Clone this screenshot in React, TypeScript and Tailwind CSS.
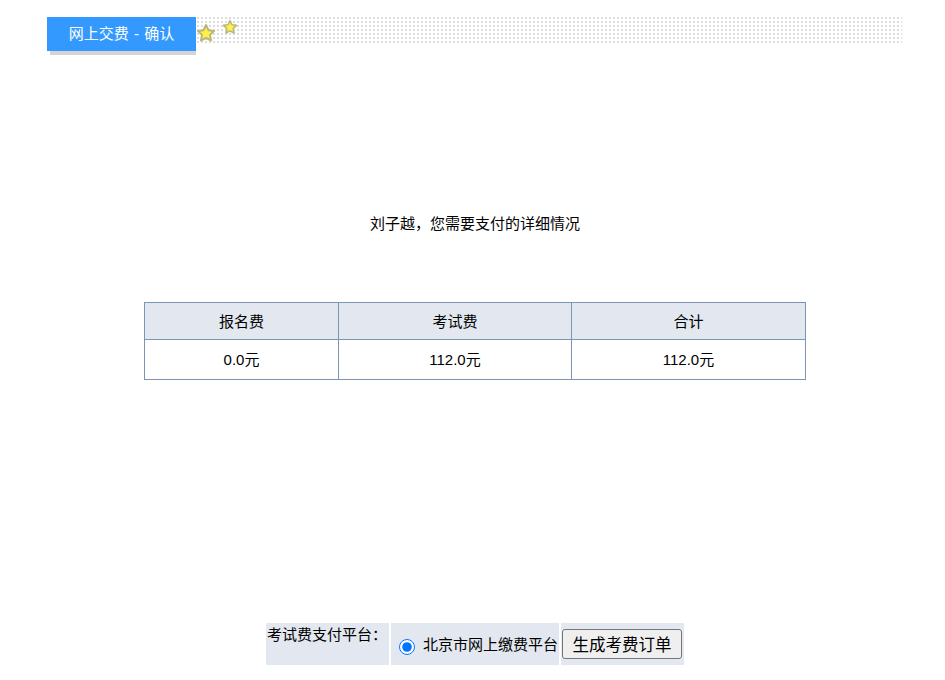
const font = "font-['Liberation_Sans','Noto_Sans_CJK_SC',sans-serif]";

const Star = ({ className }: { className: string }) => (
  <svg viewBox="0 0 20 20" className={className}>
    <path
      d="M10 2l2.5 5.2 5.6.8-4.1 3.9 1 5.6-5-2.7-5 2.7 1-5.6-4.1-3.9 5.6-.8z"
      fill="#fff04f"
      stroke="#b9b878"
      strokeWidth="2"
      strokeLinejoin="round"
    />
  </svg>
);

const cols = [
  { name: "报名费", fee: "0.0元", width: "w-[194px]" },
  { name: "考试费", fee: "112.0元", width: "w-[233px]" },
  { name: "合计", fee: "112.0元", width: "w-[234px]" },
];

export default function App() {
  return (
    <div className={`${font} w-[945px] h-[680px] bg-white text-black text-[15px] overflow-hidden`}>
      <div className="pt-[17px] pl-[47px]">
        <div className="w-[855px] h-7 flex bg-[conic-gradient(#dedede_25%,transparent_0)] bg-[length:4px_4px]">
          <div className="relative w-[149px] h-[34px] shrink-0 bg-[#3399ff] text-white flex items-center justify-center [word-spacing:1px]">
            网上交费 - 确认
            <div className="absolute left-[3px] right-0 top-full h-1 bg-[#d4d4d4]" />
          </div>
          <Star className="w-5 h-5 mt-[6px] ml-0" />
          <Star className="w-4 h-4 mt-[2px] ml-[6px]" />
        </div>
      </div>

      <p className="mt-[169px] text-center h-5 leading-5 pl-[5px]">刘子越，您需要支付的详细情况</p>

      <table className="mt-[68px] ml-[144px] w-[662px] border-collapse border border-[#7a96b4] table-fixed">
        <tbody>
          <tr className="h-[37px] bg-[#e3e7ef]">
            {cols.map((c) => (
              <td key={c.name} className={`${c.width} border border-[#7a96b4] text-center p-0 pt-[2px]`}>
                {c.name}
              </td>
            ))}
          </tr>
          <tr className="h-10">
            {cols.map((c) => (
              <td key={c.name} className="border border-[#7a96b4] text-center p-0 pt-[2px]">
                {c.fee}
              </td>
            ))}
          </tr>
        </tbody>
      </table>

      <div className="mt-[243px] ml-[266px] flex h-[42px] gap-[2px]">
        <div className="w-[123px] bg-[#e3e7ef] pl-[1px] pt-[2px] leading-5">考试费支付平台：</div>
        <div className="w-[168px] bg-[#e3e7ef] flex items-center pl-2">
          <input type="radio" defaultChecked className="w-4 h-4 m-0 mt-[6px] mr-2 accent-[#0075ff]" />
          <span className="mt-[2px]">北京市网上缴费平台</span>
        </div>
        <div className="w-[123px] bg-[#e3e7ef] flex items-center pl-[1px]">
          <button className="w-[120px] h-[30px] bg-[#efefef] border border-[#767676] rounded-[3px] text-[16.5px] pt-[2px]">
            生成考费订单
          </button>
        </div>
      </div>
    </div>
  );
}
